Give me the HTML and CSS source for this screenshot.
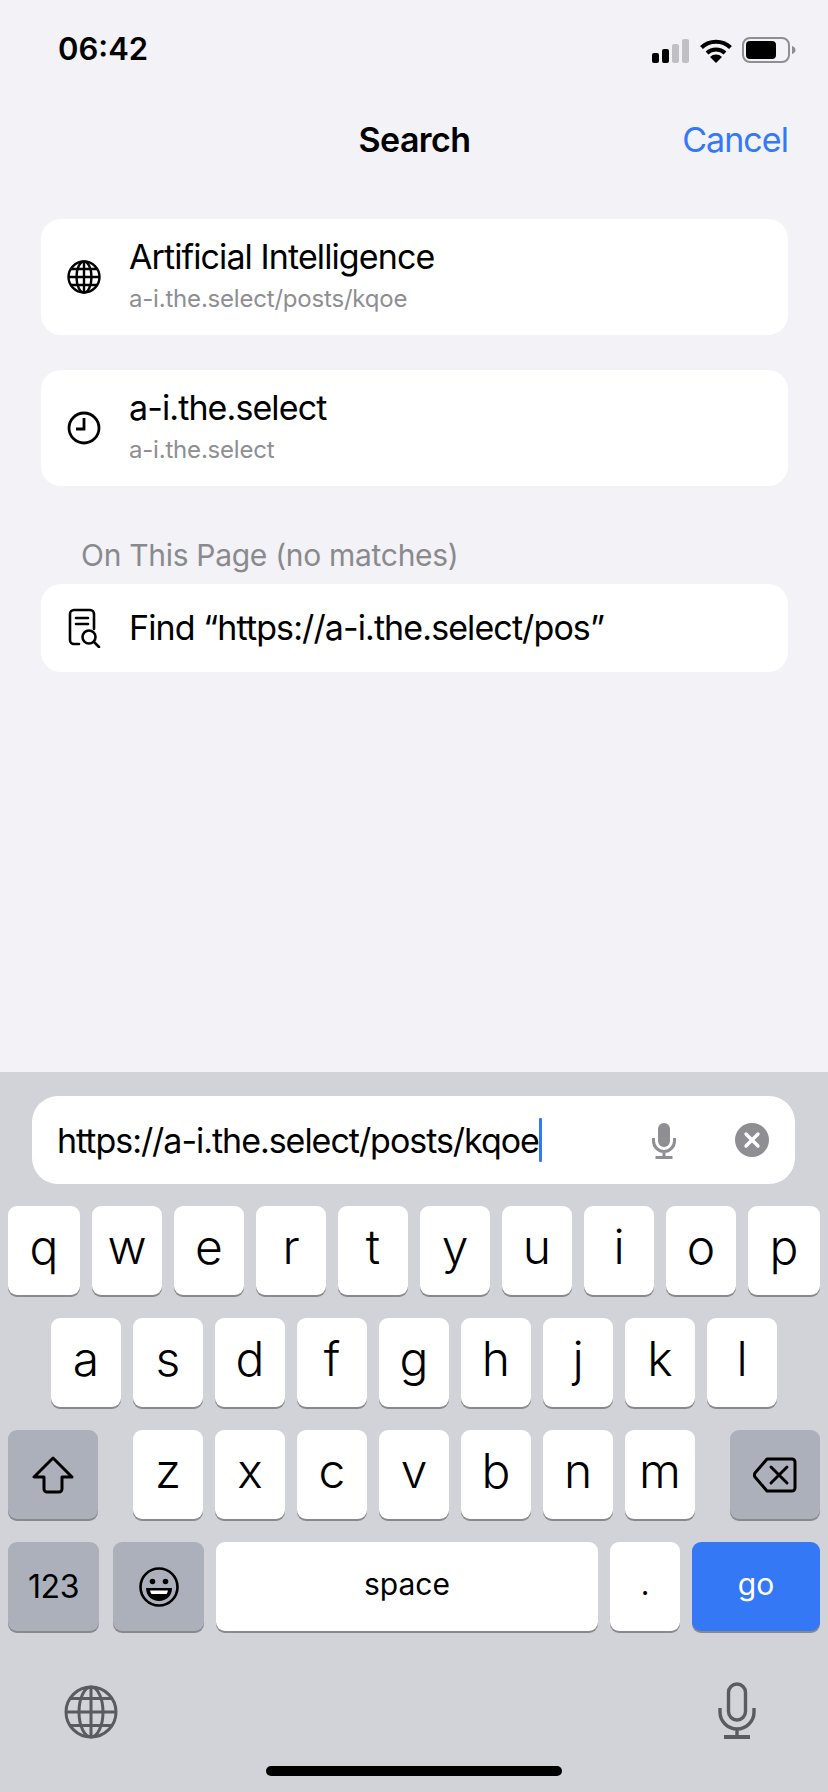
FILE: index.html
```html
<!DOCTYPE html>
<html lang="en">
<head>
    <meta charset="UTF-8">
    <meta name="viewport" content="width=device-width, initial-scale=1.0">
    <title>Search</title>
    <link rel="stylesheet" href="styles.css">
</head>
<body>
    <div class="status">
        <span class="time">06:42</span>
        <div class="status-icons">
            <svg class="signal" width="38" height="24" viewBox="0 0 38 24">
                <rect x="0" y="14" width="7" height="10" rx="2" fill="#000"/>
                <rect x="10" y="10" width="7" height="14" rx="2" fill="#000"/>
                <rect x="20" y="5" width="7" height="19" rx="2" fill="#c0c0c4"/>
                <rect x="30" y="0" width="7" height="24" rx="2" fill="#c0c0c4"/>
            </svg>
            <svg class="wifi" width="34" height="25" viewBox="0 0 34 25">
                <path d="M2.5 9.5a21 21 0 0 1 29 0" fill="none" stroke="#000" stroke-width="4"/>
                <path d="M8 15a13 13 0 0 1 18 0" fill="none" stroke="#000" stroke-width="4"/>
                <path d="M17 25l-6-6a8.500 8.500 0 0 1 12 0z" fill="#000"/>
            </svg>
            <svg class="battery" width="54" height="26" viewBox="0 0 54 26">
                <rect x="1" y="1" width="46" height="24" rx="7" fill="none" stroke="#8e8e93" stroke-width="2"/>
                <rect x="4" y="4" width="30" height="18" rx="4" fill="#000"/>
                <path d="M50 9c2 .5 3.500 2 3.500 4s-1.500 3.500-3.500 4z" fill="#8e8e93"/>
            </svg>
        </div>
    </div>

    <div class="nav">
        <span></span>
        <span class="nav-title">Search</span>
        <span class="nav-cancel">Cancel</span>
    </div>

    <div class="results">
        <div class="card card-two">
            <svg class="row-icon" width="34" height="34" viewBox="0 0 34 34" fill="none" stroke="#000" stroke-width="2.400">
                <circle cx="17" cy="17" r="15.500"/>
                <ellipse cx="17" cy="17" rx="7.500" ry="15.500"/>
                <path d="M17 1.500v31M1.500 17h31M4 9h26M4 25h26"/>
            </svg>
            <div class="row-text">
                <div class="row-title">Artificial Intelligence</div>
                <div class="row-sub">a-i.the.select/posts/kqoe</div>
            </div>
        </div>
        <div class="card card-two">
            <svg class="row-icon" width="34" height="34" viewBox="0 0 34 34" fill="none" stroke="#000" stroke-width="2.800">
                <circle cx="17" cy="17" r="15"/>
                <path d="M17 7v11H9"/>
            </svg>
            <div class="row-text">
                <div class="row-title">a-i.the.select</div>
                <div class="row-sub">a-i.the.select</div>
            </div>
        </div>
        <div class="section-label">On This Page (no matches)</div>
        <div class="card card-one">
            <svg class="row-icon" width="34" height="40" viewBox="0 0 34 40" fill="none" stroke="#000" stroke-width="2.600" stroke-linecap="round">
                <path d="M12 36H7a4 4 0 0 1-4-4V6a4 4 0 0 1 4-4h16a4 4 0 0 1 4 4v15"/>
                <path d="M9 10h12M9 16h12"/>
                <circle cx="22" cy="29" r="6.500"/>
                <path d="M27 34l5 5"/>
            </svg>
            <div class="row-title">Find “https://a-i.the.select/pos”</div>
        </div>
    </div>

    <div class="keyboard">
        <div class="field">
            <span class="field-text">https://a-i.the.select/posts/kqoe</span>
            <span class="caret"></span>
            <span class="field-gap"></span>
            <svg class="field-mic" width="24" height="36" viewBox="0 0 24 36" fill="none" stroke="#8e8e93" stroke-width="3">
                <rect x="6" y="0" width="12" height="24" rx="6" fill="#8e8e93" stroke="none"/>
                <path d="M1.500 15v3a10.500 10.500 0 0 0 21 0v-3M12 29v5M3.500 34.500h17"/>
            </svg>
            <svg class="field-clear" width="34" height="34" viewBox="0 0 34 34">
                <circle cx="17" cy="17" r="17" fill="#8e8e93"/>
                <path d="M11 11l12 12M23 11L11 23" stroke="#fff" stroke-width="3.400" stroke-linecap="round"/>
            </svg>
        </div>

        <div class="keys">
            <div class="key-row">
                <div class="key key-edge">q</div><div class="key">w</div><div class="key">e</div><div class="key">r</div><div class="key">t</div>
                <div class="key">y</div><div class="key">u</div><div class="key">i</div><div class="key">o</div><div class="key key-edge">p</div>
            </div>
            <div class="key-row key-row-mid">
                <div class="key">a</div><div class="key">s</div><div class="key">d</div><div class="key">f</div><div class="key">g</div>
                <div class="key">h</div><div class="key">j</div><div class="key">k</div><div class="key">l</div>
            </div>
            <div class="key-row key-row-split">
                <div class="key key-dark key-side">
                    <svg width="42" height="38" viewBox="0 0 42 38" fill="none" stroke="#000" stroke-width="3" stroke-linejoin="round">
                        <path d="M21 2L2 21h10v12a3 3 0 0 0 3 3h12a3 3 0 0 0 3-3V21h10z"/>
                    </svg>
                </div>
                <div class="key-group">
                    <div class="key">z</div><div class="key">x</div><div class="key">c</div><div class="key">v</div>
                    <div class="key">b</div><div class="key">n</div><div class="key">m</div>
                </div>
                <div class="key key-dark key-side">
                    <svg width="44" height="36" viewBox="0 0 44 36" fill="none" stroke="#000" stroke-width="3" stroke-linejoin="round" stroke-linecap="round">
                        <path d="M14 2h25a3 3 0 0 1 3 3v26a3 3 0 0 1-3 3H14L2 20a4 4 0 0 1 0-4z"/>
                        <path d="M18 10l16 16M34 10L18 26"/>
                    </svg>
                </div>
            </div>
            <div class="key-row">
                <div class="key key-dark key-num">123</div>
                <div class="key key-dark key-emoji">
                    <svg width="40" height="40" viewBox="0 0 40 40" fill="none" stroke="#000" stroke-width="2.600">
                        <circle cx="20" cy="20" r="18.500"/>
                        <circle cx="13.500" cy="14.500" r="2.800" fill="#000" stroke="none"/>
                        <circle cx="26.500" cy="14.500" r="2.800" fill="#000" stroke="none"/>
                        <path d="M7 21h26c0 8-6 13-13 13S7 29 7 21z" fill="#000" stroke="none"/>
                        <path d="M11 23.500h18c-.5 2-1 3-1.500 3.500h-15c-.5-.5-1-1.500-1.500-3.500z" fill="#fff" stroke="none"/>
                    </svg>
                </div>
                <div class="key key-space">space</div>
                <div class="key key-dot">.</div>
                <div class="key key-go">go</div>
            </div>
        </div>

        <div class="kb-bottom">
            <svg class="kb-globe" width="54" height="54" viewBox="0 0 54 54" fill="none" stroke="#5a5b60" stroke-width="3">
                <circle cx="27" cy="27" r="25"/>
                <ellipse cx="27" cy="27" rx="12" ry="25"/>
                <path d="M27 2v50M2 27h50M6.500 13.500h41M6.500 40.500h41"/>
            </svg>
            <svg width="38" height="57" viewBox="0 0 38 57" fill="none" stroke="#5a5b60" stroke-width="3.400">
                <rect x="10.500" y="2" width="17" height="36" rx="8.500"/>
                <path d="M2 26v4a17 17 0 0 0 34 0v-4M19 47v7"/>
                <path d="M6 55h26" stroke-width="4"/>
            </svg>
        </div>
        <div class="home-wrap"><div class="home-bar"></div></div>
    </div>
</body>
</html>
```

FILE: styles.css
```css
body {
    margin: 0;
    width: 828px;
    height: 1792px;
    display: flex;
    flex-direction: column;
    overflow: hidden;
    font-family: "Inter", "Liberation Sans", sans-serif;
    color: #000;
    background-color: #f2f2f7;
}

.status {
    height: 100px;
    padding: 30px 32px 0 58px;
    box-sizing: border-box;
    display: flex;
    justify-content: space-between;
    align-items: flex-start;
}
.time {
    font-size: 31px;
    font-weight: 600;
    line-height: 38px;
}
.status-icons {
    display: flex;
    align-items: flex-end;
    gap: 9px;
    padding-top: 7px;
}

.nav {
    height: 80px;
    padding: 0 40px 0 41px;
    display: grid;
    grid-template-columns: 1fr auto 1fr;
    align-items: center;
    font-size: 34px;
    line-height: 40px;
}
.nav-title {
    font-weight: 600;
    letter-spacing: -0.6px;
}
.nav-cancel {
    text-align: right;
    color: #3478f6;
    letter-spacing: -0.95px;
}

.results {
    flex: 1;
    padding: 39px 40px 0 41px;
}
.card {
    display: flex;
    align-items: center;
    gap: 28px;
    padding-left: 26px;
    background-color: #fff;
    border-radius: 20px;
}
.card-two {
    height: 116px;
    margin-bottom: 35px;
}
.card-one {
    height: 88px;
}
.row-icon {
    flex: none;
}
.row-text {
    display: flex;
    flex-direction: column;
    gap: 8px;
    margin-top: -3px;
}
.row-title {
    font-size: 34px;
    line-height: 38px;
    letter-spacing: -0.9px;
}
.row-sub {
    font-size: 24px;
    line-height: 30px;
    color: #8e8e93;
    letter-spacing: -0.2px;
}
.section-label {
    margin: 51px 0 11px 40px;
    font-size: 30px;
    line-height: 36px;
    color: #8a8a8e;
    letter-spacing: -0.3px;
}

.keyboard {
    height: 720px;
    padding-top: 24px;
    box-sizing: border-box;
    background-color: #d1d3d9;
}
.field {
    margin: 0 33px 0 32px;
    height: 88px;
    padding: 0 20px 0 25px;
    display: flex;
    align-items: center;
    background-color: #fff;
    border-radius: 26px;
}
.field-text {
    font-size: 34px;
    letter-spacing: -1.03px;
}
.caret {
    width: 3px;
    height: 44px;
    background-color: #3478f6;
    border-radius: 1px;
}
.field-gap {
    flex: 1;
}
.field-mic {
    margin-right: 59px;
    margin-top: 2px;
}
.field-clear {
    margin-right: 6px;
}

.keys {
    margin-top: 22px;
    padding: 0 8px;
    display: flex;
    flex-direction: column;
    gap: 23px;
}
.key-row {
    display: flex;
    gap: 12px;
}
.key-row-mid {
    justify-content: center;
}
.key-row-split {
    justify-content: space-between;
}
.key-group {
    display: flex;
    gap: 12px;
}
.key {
    width: 70px;
    height: 89px;
    padding-bottom: 8px;
    display: flex;
    justify-content: center;
    align-items: center;
    flex: none;
    box-sizing: border-box;
    font-size: 48px;
    font-weight: 300;
    color: #000;
    background-color: #fff;
    border-radius: 9px;
    box-shadow: 0 2px 0 #88898d;
}
.key-edge {
    width: 72px;
}
.key-dark {
    padding-bottom: 0;
    background-color: #abb0bb;
}
.key-side {
    width: 90px;
}
.key-num {
    width: 91px;
    font-size: 32px;
    font-weight: 400;
    letter-spacing: -0.5px;
}
.key-emoji {
    width: 91px;
    margin-left: 2px;
}
.key-space {
    width: 382px;
    padding-bottom: 6px;
    font-size: 30px;
    font-weight: 400;
}
.key-dot {
    width: 70px;
    padding-bottom: 6px;
    font-size: 30px;
    font-weight: 400;
}
.key-go {
    width: 128px;
    padding-bottom: 6px;
    font-size: 30px;
    font-weight: 400;
    color: #fff;
    background-color: #3478f6;
}

.kb-bottom {
    margin-top: 51px;
    padding: 0 72px 0 64px;
    display: flex;
    justify-content: space-between;
    align-items: flex-start;
}
.kb-globe {
    margin-top: 3px;
}
.home-wrap {
    margin-top: 27px;
    display: flex;
    justify-content: center;
}
.home-bar {
    width: 296px;
    height: 10px;
    background-color: #000;
    border-radius: 5px;
}
```
